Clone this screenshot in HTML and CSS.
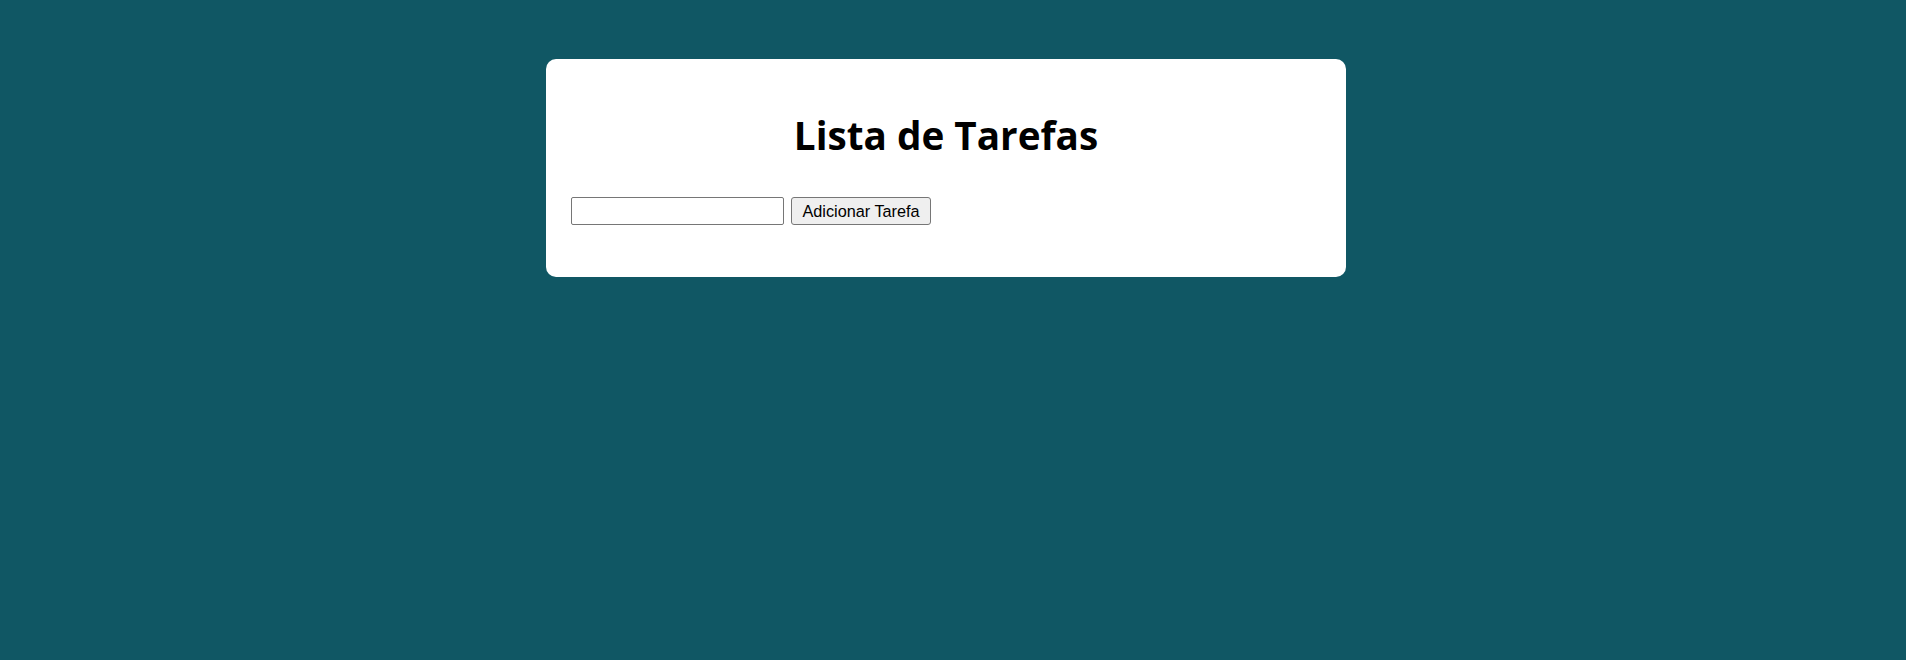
FILE: index.html
```html
<!DOCTYPE html>
<html lang="pt-BR">
<head>
    <meta charset="UTF-8">
    <meta name="viewport" content="width=device-width, initial-scale=1.0">
    <title>Lista de Tarefas</title>
    <link rel="stylesheet" href="styles.css">
</head>
<body>
    <div class="container">
        <h1>Lista de Tarefas</h1>
        <div class="task-form">
            <input type="text" id="taskInput">
            <button id="addButton">Adicionar Tarefa</button>
        </div>
        <ul id="taskList"></ul>
    </div>
</body>
</html>
```

FILE: styles.css
```css
body {
    margin: 0;
    padding: 59px 14px 0 0;
    background-color: #105764;
    font-family: "Open Sans", sans-serif;
}
.container {
    width: 800px;
    box-sizing: border-box;
    margin: 0 auto;
    padding: 52px 25px 52px;
    background-color: white;
    border-radius: 10px;
}
h1 {
    margin: 0 0 38px;
    font-size: 38.7px;
    line-height: 48px;
    font-weight: 700;
    text-align: center;
    color: #000;
}
.task-form {
    display: flex;
    gap: 7px;
}
#taskInput {
    width: 213px;
    height: 28px;
    box-sizing: border-box;
    margin: 0;
    border: 1px solid #767676;
    border-radius: 2px;
    font-family: "Liberation Sans", Arial, sans-serif;
    font-size: 16px;
}
#addButton {
    width: 140px;
    height: 28px;
    box-sizing: border-box;
    margin: 0;
    padding: 0;
    border: 1px solid #767676;
    border-radius: 3px;
    background-color: #efefef;
    color: black;
    font-family: "Liberation Sans", Arial, sans-serif;
    font-size: 16.25px;
}
#taskList {
    margin: 0;
    padding: 0;
    list-style: none;
}
```
